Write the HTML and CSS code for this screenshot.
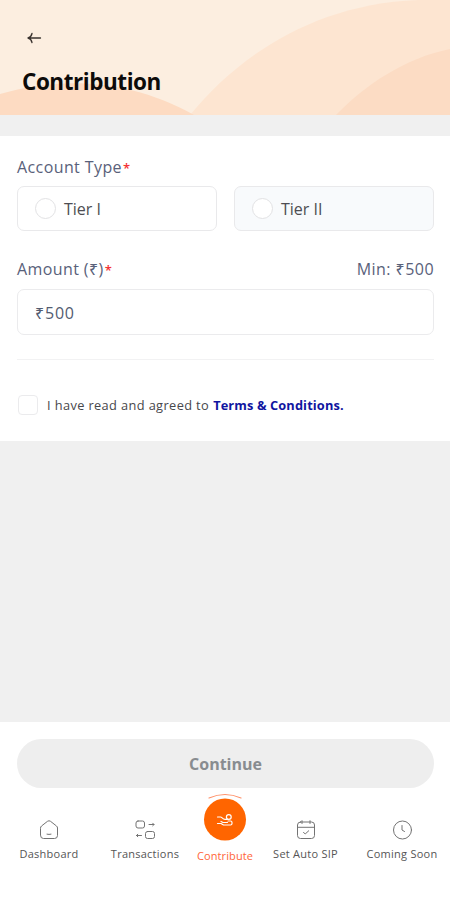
FILE: index.html
```html
<!DOCTYPE html>
<html lang="en">
<head>
<meta charset="utf-8">
<meta name="viewport" content="width=device-width, initial-scale=1">
<title>Contribution</title>
<link rel="stylesheet" href="styles.css">
</head>
<body>
<div class="app">
  <header class="header">
    <svg class="waves" viewBox="0 0 450 115" aria-hidden="true">
      <path fill="#fde5d1" d="M190 115C240 54 316 4 418 0H450V115Z"/>
      <path fill="#fcdcc4" d="M336 115C365 85 405 58 450 49V115Z"/>
      <path fill="#fddbc2" d="M0 94C56 78 124 76 194 115H0Z"/>
    </svg>
    <button class="back" aria-label="Back">
      <svg width="15" height="12" viewBox="0 0 15 12" fill="none" stroke="#3a332f" stroke-width="1.3" stroke-linecap="round" stroke-linejoin="round"><path d="M13.500 6H1M5 1.500C4.500 4 3 5.500 1 6C3 6.500 4.500 8 5 10.500"/></svg>
    </button>
    <h1 class="title"><span>Contribution</span></h1>
  </header>

  <main class="form">
    <div class="label-row"><span class="label account">Account Type<b class="req">*</b></span></div>
    <div class="options">
      <label class="option"><i class="radio"></i><span>Tier I</span></label>
      <label class="option shaded"><i class="radio"></i><span>Tier II</span></label>
    </div>
    <div class="label-row amount-row"><span class="label amount">Amount (₹)<b class="req">*</b></span><span class="label min">Min: ₹500</span></div>
    <div class="field"><span>₹500</span></div>
    <hr class="rule">
    <div class="terms"><i class="check"></i><span class="agree">I have read and agreed to</span><a class="link">Terms &amp; Conditions.</a></div>
  </main>

  <footer class="footer">
    <button class="continue"><span>Continue</span></button>
    <nav class="nav">
      <a class="item dashboard">
        <svg width="22" height="22" viewBox="0 0 22 22"><path d="M2.500 9Q2.500 7.800 3.500 7L9.500 2.300Q11 1.200 12.500 2.300L18.500 7Q19.500 7.800 19.500 9V16.500Q19.500 19.500 16.500 19.500H5.500Q2.500 19.500 2.500 16.500ZM9 15.200Q11 15.700 13 15.200"/></svg>
        <span>Dashboard</span>
      </a>
      <a class="item transactions">
        <svg width="22" height="22" viewBox="0 0 22 22"><rect x="2" y="2" width="8.500" height="7" rx="2"/><rect x="11.500" y="12.500" width="9" height="7" rx="2"/><path d="M15 5.500H20M18.700 4.200L20 5.500L18.700 6.800M7.500 16.500H2.500M3.800 15.200L2.500 16.500L3.800 17.800"/></svg>
        <span>Transactions</span>
      </a>
      <a class="item contribute">
        <svg width="44" height="50" viewBox="0 0 44 50"><path class="arc" d="M6 5Q22-2 38 5"/><circle class="disc" cx="22" cy="26.500" r="21"/><g class="hand"><circle cx="25.800" cy="24" r="2.400"/><path d="M14.500 24H17.500C19 24 19.500 26.300 22 26.300H24.500M14.500 30.500H18L20.500 32H27.500Q29 32 29 30.500V29.500Q29 28 27.500 28H25M18 28.500L20 29.500H24.500"/></g></svg>
        <span>Contribute</span>
      </a>
      <a class="item sip">
        <svg width="22" height="22" viewBox="0 0 22 22"><rect x="2.500" y="3" width="17" height="16.500" rx="3"/><path d="M2.500 8.300H19.500M7 1.700V4.500M15 1.700V4.500M8.500 13.300L10.200 15L13.700 11.800"/></svg>
        <span>Set Auto SIP</span>
      </a>
      <a class="item soon">
        <svg width="22" height="22" viewBox="0 0 22 22"><circle cx="11.500" cy="11" r="9"/><path d="M11 6.500V11L13.500 12.500"/></svg>
        <span>Coming Soon</span>
      </a>
    </nav>
  </footer>
</div>
</body>
</html>
```
FILE: styles.css
```css
* { box-sizing: border-box; }
body { margin: 0; font-family: "Open Sans", "Noto Sans", sans-serif; }
button { border: 0; padding: 0; background: none; font: inherit; }
svg { display: block; }
span, a { white-space: nowrap; }
.app { width: 450px; height: 900px; display: flex; flex-direction: column; background: #f0f0f0; }

.header { position: relative; flex: none; height: 115px; padding: 32px 22px 0; background: #fceee0; }
.waves { position: absolute; top: 0; left: 0; width: 450px; height: 115px; }
.back { position: relative; display: block; margin-left: 5px; }
.title { position: relative; margin: 21px 0 0; font-size: 22.5px; line-height: 34px; font-weight: 700; letter-spacing: -0.45px; color: #0d0b0a; }

.form { flex: none; height: 305px; margin-top: 21px; padding: 19px 16px 0 17px; background: #fff; }
.label-row { display: flex; justify-content: space-between; height: 24px; line-height: 24px; }
.label { font-size: 16px; color: #59617a; }
.account { letter-spacing: 0.4px; }
.amount { letter-spacing: 0.4px; }
.min { letter-spacing: 0.45px; }
.req { margin-left: 1px; font-size: 13px; line-height: 1; color: #f43235; font-weight: 600; }
.options { display: flex; gap: 17px; margin-top: 7px; }
.option { flex: 1; height: 45px; display: flex; align-items: center; gap: 8px; padding-left: 17px; border: 1.5px solid #e9e9eb; border-radius: 7px; font-size: 16px; color: #4d4d52; }
.shaded { background: #f8fafc; }
.radio { width: 21px; height: 21px; border: 1.5px solid #e2e2e4; border-radius: 50%; background: #fff; }
.amount-row { margin-top: 26px; }
.field { height: 46px; margin-top: 8px; padding: 1px 0 0 17px; display: flex; align-items: center; border: 1.5px solid #ebebed; border-radius: 7px; font-size: 16px; letter-spacing: 0.8px; color: #525b70; }
.rule { height: 1px; margin: 24px 0 0; border: 0; background: #f2f2f3; }
.terms { display: flex; align-items: center; height: 20px; margin-top: 35px; font-size: 12.8px; color: #47474b; }
.agree { letter-spacing: 0.38px; }
.check { width: 20px; height: 20px; margin: 0 9px 0 1px; border: 1.5px solid #ebebed; border-radius: 4px; }
.link { margin-left: 4px; font-weight: 700; letter-spacing: 0.12px; color: #1015a0; }

.footer { height: 178px; margin-top: auto; padding: 17px 16px 0 17px; background: #fff; }
.continue { display: flex; align-items: center; justify-content: center; width: 100%; height: 49px; border-radius: 25px; background: #eee; font-size: 16px; font-weight: 700; color: #888c90; }
.nav { display: grid; grid-template-columns: 64px 128px 32px 129px 64px; justify-items: center; height: 80px; margin-top: 5px; font-size: 11px; letter-spacing: 0.25px; }
.item { display: flex; flex-direction: column; align-items: center; padding-top: 26px; color: #555; }
.item svg { fill: none; stroke: #737373; stroke-width: 1; stroke-linecap: round; stroke-linejoin: round; }
.item span { margin-top: 5px; line-height: 16px; }
.contribute { padding-top: 0; color: #ff6639; }
.contribute span { margin-top: 5px; letter-spacing: 0.1px; }
.item .arc { stroke: #ff9068; stroke-width: 1.2; }
.item .disc { fill: #ff6500; stroke: none; }
.item .hand { stroke: #fff; stroke-width: 1.2; }
```
